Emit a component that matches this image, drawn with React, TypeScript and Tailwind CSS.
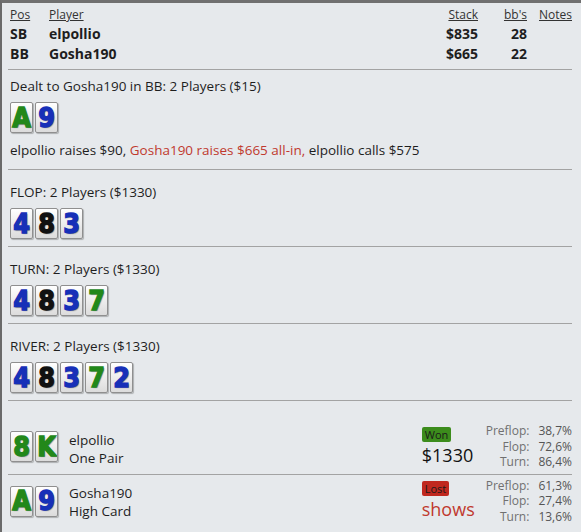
import React from "react";

type C = { r: string; s: "g" | "b" | "k" };

const suitColor = { g: "text-[#22881a]", b: "text-[#1730b8]", k: "text-[#111111]" };

function Card({ card }: { card: C }) {
  return (
    <div className="w-[23px] h-[31px] border border-[#8f8f8f] rounded-[2px] bg-gradient-to-b from-white to-[#dcdcdc] shadow-[1px_1px_1px_rgba(0,0,0,0.25)] flex items-center justify-center overflow-hidden">
      <span
        className={`${suitColor[card.s]} font-bold text-[24px] leading-none scale-y-[1.12] [-webkit-text-stroke:1.3px_currentColor] [text-shadow:1px_1px_1px_rgba(0,0,0,0.45)]`}
        style={{ fontFamily: '"DejaVu Sans", sans-serif' }}
      >
        {card.r}
      </span>
    </div>
  );
}

function Cards({ cards }: { cards: C[] }) {
  return (
    <div className="flex gap-[2px]">
      {cards.map((c, i) => (
        <Card key={i} card={c} />
      ))}
    </div>
  );
}

const flop: C[] = [
  { r: "4", s: "b" },
  { r: "8", s: "k" },
  { r: "3", s: "b" },
];
const turn: C[] = [...flop, { r: "7", s: "g" }];
const river: C[] = [...turn, { r: "2", s: "b" }];

function Street({ title, cards }: { title: string; cards: C[] }) {
  return (
    <div className="border-b border-[#a3a3a3] pt-[14px] pb-[7px] pl-[2px]">
      <div className="h-[16px] leading-[16px]">{title}</div>
      <div className="mt-[8px]">
        <Cards cards={cards} />
      </div>
    </div>
  );
}

function Stats({ rows }: { rows: [string, string][] }) {
  return (
    <div className="grid grid-cols-[auto_auto] gap-x-[9px] text-[12px] leading-[15.5px]">
      {rows.map(([k, v]) => (
        <React.Fragment key={k}>
          <span className="text-right text-[#707070]">{k}</span>
          <span className="text-[#555555]">{v}</span>
        </React.Fragment>
      ))}
    </div>
  );
}

export default function App() {
  return (
    <div
      className="w-[581px] h-[532px] bg-[#e6e9ec] border-t-[3px] border-t-[#707070] border-l-2 border-l-[#6a6a6a] text-[13.5px] text-[#1e1e1e] overflow-hidden"
      style={{ fontFamily: '"Open Sans", sans-serif' }}
    >
      <div className="pl-[6px] pr-[9px]">
        {/* players table */}
        <div className="border-b border-[#a3a3a3] pt-[3px] pb-[5px]">
          <div className="flex text-[12px] leading-[18px] text-[#333]">
            <span className="w-[41px] pl-[2px] underline">Pos</span>
            <span className="flex-1 underline">Player</span>
            <span className="w-[60px] text-right underline">Stack</span>
            <span className="w-[49px] text-right underline">bb's</span>
            <span className="w-[45px] text-right underline">Notes</span>
          </div>
          {[
            ["SB", "elpollio", "$835", "28"],
            ["BB", "Gosha190", "$665", "22"],
          ].map((r) => (
            <div key={r[0]} className="flex font-bold text-[14px] leading-[20px]">
              <span className="w-[41px] pl-[2px]">{r[0]}</span>
              <span className="flex-1">{r[1]}</span>
              <span className="w-[60px] text-right">{r[2]}</span>
              <span className="w-[49px] text-right">{r[3]}</span>
              <span className="w-[45px]" />
            </div>
          ))}
        </div>

        {/* preflop */}
        <div className="border-b border-[#a3a3a3] pt-[8px] pb-[10px] pl-[2px]">
          <div className="h-[16px] leading-[16px]">Dealt to Gosha190 in BB: 2 Players ($15)</div>
          <div className="mt-[8px]">
            <Cards cards={[{ r: "A", s: "g" }, { r: "9", s: "b" }]} />
          </div>
          <div className="mt-[8px] leading-[18px]">
            elpollio raises $90, <span className="text-[#c0392e]">Gosha190 raises $665 all-in,</span> elpollio calls $575
          </div>
        </div>

        <Street title="FLOP: 2 Players ($1330)" cards={flop} />
        <Street title="TURN: 2 Players ($1330)" cards={turn} />
        <Street title="RIVER: 2 Players ($1330)" cards={river} />

        {/* showdown */}
        <div className="pt-[22px]">
          <div className="flex items-start border-b border-[#a3a3a3] pb-[4px] pl-[2px]">
            <div className="pt-[8px]">
              <Cards cards={[{ r: "8", s: "g" }, { r: "K", s: "g" }]} />
            </div>
            <div className="ml-[11px] pt-[8px] leading-[18px]">
              <div>elpollio</div>
              <div>One Pair</div>
            </div>
            <div className="ml-auto w-[64px] flex flex-col items-start pt-[4px]">
              <span className="bg-[#3c8c1c] text-[#1a1a1a] text-[11px] leading-[15px] px-[3px] rounded-[2px]">Won</span>
              <span className="text-[18px] leading-[26px] text-[#111]">$1330</span>
            </div>
            <Stats rows={[["Preflop:", "38,7%"], ["Flop:", "72,6%"], ["Turn:", "86,4%"]]} />
          </div>
          <div className="flex items-start pt-[3px] pl-[2px]">
            <div className="pt-[8px]">
              <Cards cards={[{ r: "A", s: "g" }, { r: "9", s: "b" }]} />
            </div>
            <div className="ml-[11px] pt-[6px] leading-[18px]">
              <div>Gosha190</div>
              <div>High Card</div>
            </div>
            <div className="ml-auto w-[64px] flex flex-col items-start pt-[3px]">
              <span className="bg-[#c0281f] text-[#1a1a1a] text-[11px] leading-[15px] px-[3px] rounded-[2px]">Lost</span>
              <span className="text-[18px] leading-[26px] text-[#c0392e]">shows</span>
            </div>
            <Stats rows={[["Preflop:", "61,3%"], ["Flop:", "27,4%"], ["Turn:", "13,6%"]]} />
          </div>
        </div>
      </div>
    </div>
  );
}
